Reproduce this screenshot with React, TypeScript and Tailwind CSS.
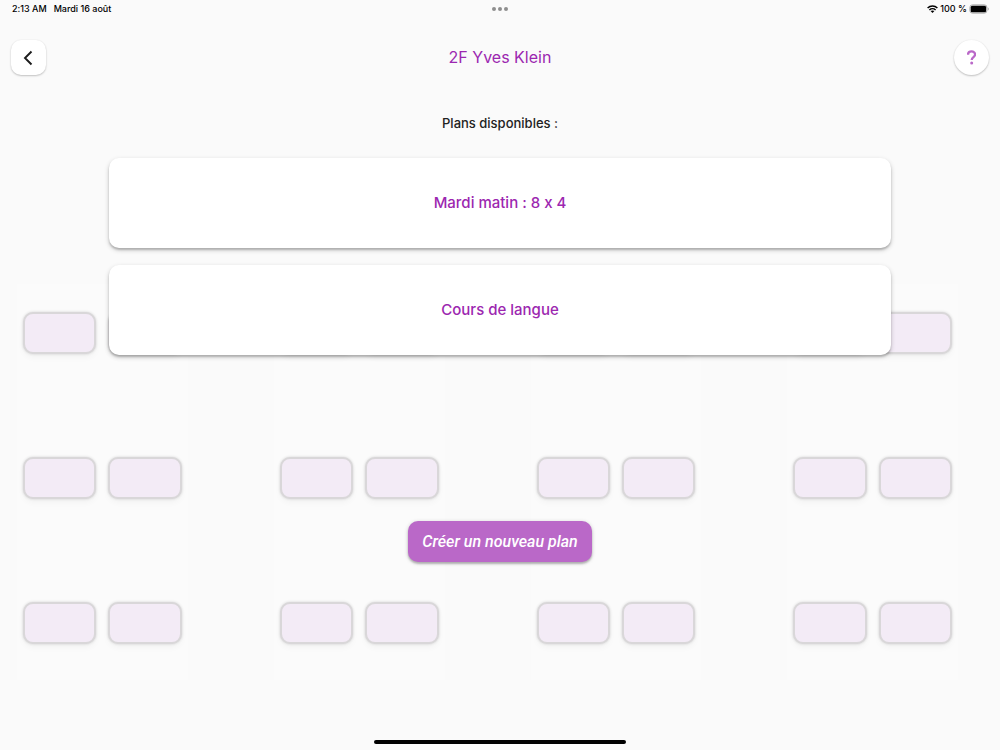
const plans = ["Mardi matin : 8 x 4", "Cours de langue"];
const deskRows = [0, 1, 2];
const deskGroups = [0, 1, 2, 3];

function Desk() {
  return (
    <div className="h-[42px] flex-1 rounded-[10px] border-2 border-[#d9d7d9] bg-[#f3ebf6] shadow-[0_0_3px_rgba(0,0,0,0.16),0_4px_6px_rgba(0,0,0,0.03)]" />
  );
}

function Classroom() {
  return (
    <div
      aria-hidden="true"
      className="absolute inset-x-0 top-[284px] flex gap-[86px] pr-[42px] pl-[17px]"
    >
      {deskGroups.map((group) => (
        <div
          key={group}
          className="flex flex-1 flex-col gap-[103px] bg-[#fbfbfb] px-[6px] pt-[28px] pb-[36px]"
        >
          {deskRows.map((row) => (
            <div key={row} className="flex gap-[12px]">
              <Desk />
              <Desk />
            </div>
          ))}
        </div>
      ))}
    </div>
  );
}

function StatusBar() {
  return (
    <div className="grid h-[18px] grid-cols-3 items-center pr-[11px] pl-3 text-[9px] leading-[18px] font-medium text-black">
      <div className="flex gap-[7px]">
        <span>2:13 AM</span>
        <span>Mardi 16 août</span>
      </div>
      <div className="flex justify-center gap-[2px]">
        <span className="size-1 rounded-full bg-[#8e8e8e]" />
        <span className="size-1 rounded-full bg-[#8e8e8e]" />
        <span className="size-1 rounded-full bg-[#8e8e8e]" />
      </div>
      <div className="flex items-center justify-end gap-[2px]">
        <svg width="11" height="8" viewBox="0 0 22 16" aria-label="Wi-Fi">
          <g fill="none" stroke="#000" strokeWidth="2.9">
            <path d="M1.2 6.2C6.700 0.600 15.300 0.600 20.800 6.200" />
            <path d="M4.800 9.800C8.300 6.400 13.700 6.400 17.200 9.800" />
          </g>
          <path d="M11 16 7.300 12.200C9.400 10.400 12.600 10.400 14.700 12.200Z" fill="#000" />
        </svg>
        <span>100 %</span>
        <svg width="20" height="10" viewBox="0 0 20 10" aria-label="Batterie">
          <rect x="0.900" y="0.900" width="17" height="8.200" rx="2.500" fill="#fafafa" stroke="#a5a5a5" />
          <rect x="1.700" y="1.700" width="15.400" height="6.600" rx="1.500" fill="#000" />
          <path d="M18.900 3.500v3c1.200-.5 1.200-2.500 0-3Z" fill="#a5a5a5" />
        </svg>
      </div>
    </div>
  );
}

export default function App() {
  return (
    <div className="relative isolate flex min-h-screen flex-col bg-[#fafafa] font-['Inter','Liberation_Sans',sans-serif] [font-feature-settings:'calt'_0]">
      <Classroom />
      <div className="relative flex flex-1 flex-col">
        <StatusBar />
        <header className="mt-[22px] flex items-center justify-between px-[11px]">
          <button
            type="button"
            aria-label="Retour"
            className="flex size-[35px] items-center justify-center rounded-[10px] bg-white shadow-[0_1px_2px_rgba(0,0,0,0.22),0_0_2px_rgba(0,0,0,0.06)]"
          >
            <svg width="11" height="16" viewBox="0 0 11 16" fill="none" stroke="#1c1c1c" strokeWidth="1.900">
              <path d="M8.500 1.500 2 8l6.500 6.500" />
            </svg>
          </button>
          <h1 className="pb-[2px] text-[16px] leading-6 text-[#9c27b0]">2F Yves Klein</h1>
          <button
            type="button"
            aria-label="Aide"
            className="flex size-[35px] items-center justify-center rounded-full bg-white shadow-[0_1px_2px_rgba(0,0,0,0.22),0_0_2px_rgba(0,0,0,0.06)]"
          >
            <svg width="9" height="15" viewBox="0.500 0 9 15" fill="none" stroke="#ba68c8" strokeWidth="2.300">
              <path d="M1.500 4.800C1.500 2.700 3 1.300 5 1.300s3.600 1.400 3.600 3.300C8.600 7.200 5.200 7.100 5.200 10" />
              <circle cx="5.200" cy="13.100" r="1.500" fill="#ba68c8" stroke="none" />
            </svg>
          </button>
        </header>
        <main className="flex flex-1 flex-col items-center">
          <h2 className="mt-[38px] text-[13px] leading-5 font-medium text-[#222222]">
            Plans disponibles :
          </h2>
          <div className="mt-[25px] flex w-[78.2%] flex-col gap-[17px]">
            {plans.map((plan) => (
              <button
                key={plan}
                type="button"
                className="h-[90px] rounded-[10px] bg-white text-[15px] font-medium text-[#9c27b0] shadow-[0_2px_2px_rgba(0,0,0,0.18),0_2px_5px_rgba(0,0,0,0.2)]"
              >
                {plan}
              </button>
            ))}
          </div>
          <button
            type="button"
            className="mt-[166px] h-[41px] rounded-[10px] bg-[#ba68c8] px-[14px] font-['Roboto','Liberation_Sans',sans-serif] text-[16px] font-medium text-white italic shadow-[0_2px_2px_rgba(0,0,0,0.2),0_1px_4px_rgba(0,0,0,0.2)]"
          >
            Créer un nouveau plan
          </button>
        </main>
        <div className="mb-[6px] h-1 w-[252px] self-center rounded-full bg-black" />
      </div>
    </div>
  );
}
